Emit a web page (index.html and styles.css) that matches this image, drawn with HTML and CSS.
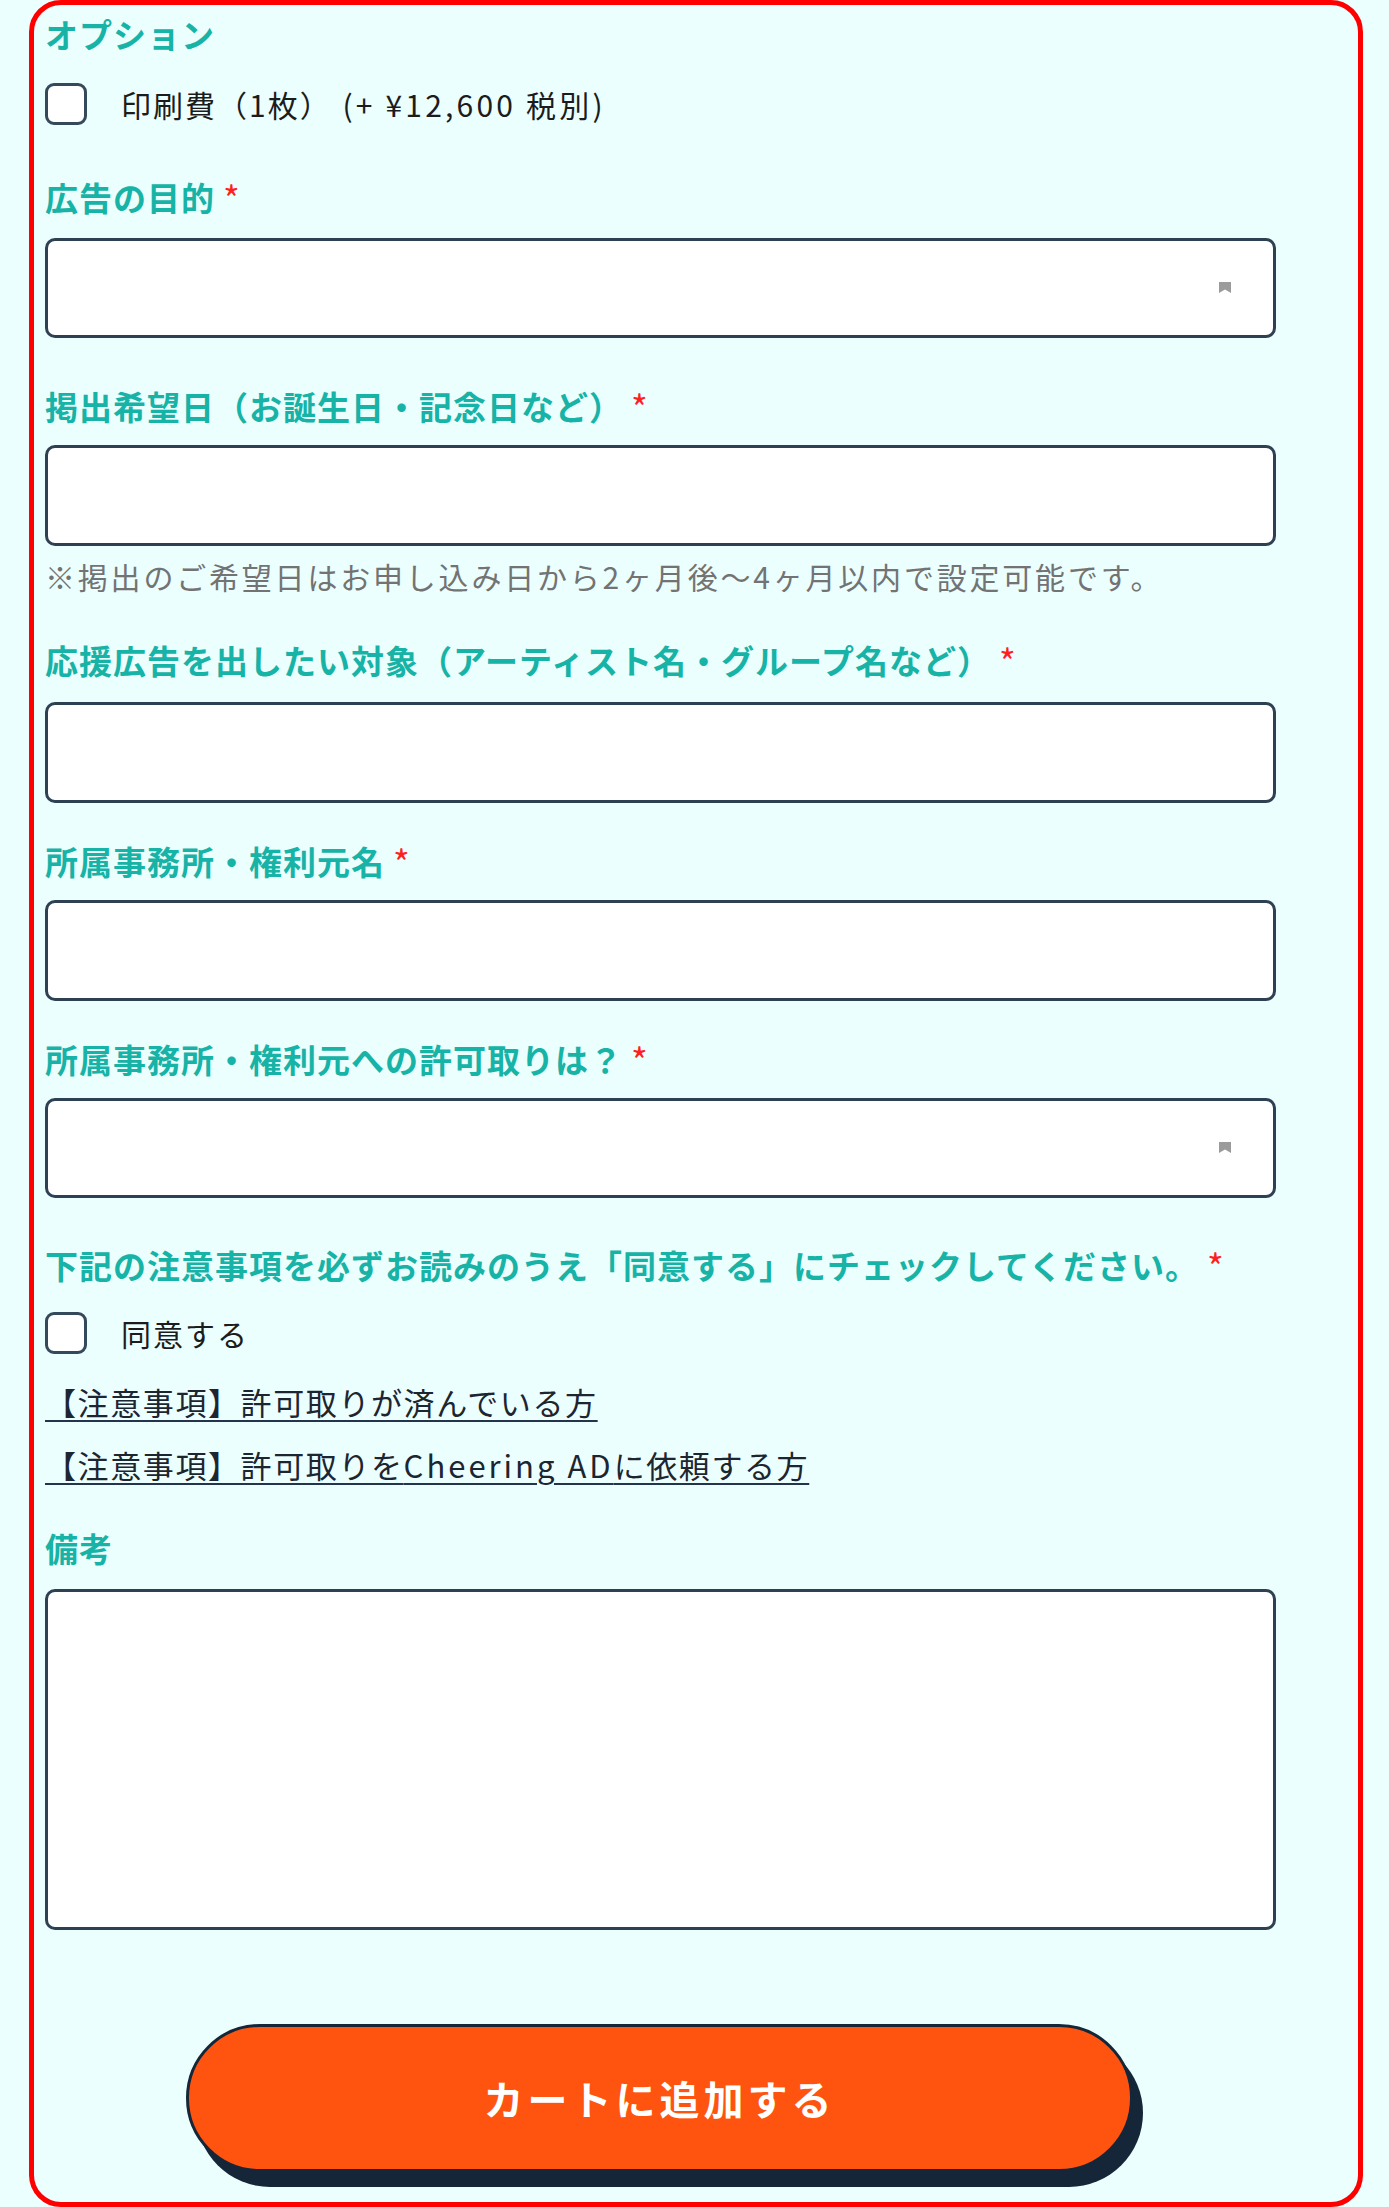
FILE: index.html
```html
<!DOCTYPE html>
<html lang="ja">
<head>
<meta charset="utf-8">
<title>オプション</title>
<link rel="stylesheet" href="styles.css">
</head>
<body>
<form class="card">
  <div class="label label-first">オプション</div>
  <label class="check-row row-option">
    <input type="checkbox" class="check">
    <span class="check-text">印刷費（1枚） <span class="price">(+ ¥12,600 税別)</span></span>
  </label>

  <div class="label gap-a">広告の目的<span class="req">*</span></div>
  <div class="select-wrap">
    <select class="field select"><option></option></select>
    <svg class="arrow" width="12" height="11" viewBox="0 0 12 11"><path d="M0 0H12V11L6 7.5L0 11Z" fill="#9b9b9b"/></svg>
  </div>

  <div class="label gap-b">掲出希望日（お誕生日・記念日など）<span class="req">*</span></div>
  <input type="text" class="field input">
  <p class="note">※掲出のご希望日はお申し込み日から2ヶ月後〜4ヶ月以内で設定可能です。</p>

  <div class="label gap-c">応援広告を出したい対象（アーティスト名・グループ名など）<span class="req">*</span></div>
  <input type="text" class="field input input-c">

  <div class="label gap-d">所属事務所・権利元名<span class="req">*</span></div>
  <input type="text" class="field input">

  <div class="label gap-d">所属事務所・権利元への許可取りは？<span class="req">*</span></div>
  <div class="select-wrap">
    <select class="field select"><option></option></select>
    <svg class="arrow" width="12" height="11" viewBox="0 0 12 11"><path d="M0 0H12V11L6 7.5L0 11Z" fill="#9b9b9b"/></svg>
  </div>

  <div class="label gap-e">下記の注意事項を必ずお読みのうえ「同意する」にチェックしてください。<span class="req">*</span></div>
  <label class="check-row row-agree">
    <input type="checkbox" class="check">
    <span class="check-text">同意する</span>
  </label>
  <a class="link link-1" href="#">【注意事項】許可取りが済んでいる方</a>
  <a class="link link-2" href="#">【注意事項】許可取りを<span class="latin">Cheering AD</span>に依頼する方</a>

  <div class="label gap-f">備考</div>
  <textarea class="field textarea"></textarea>

  <div class="btn-row">
    <button type="button" class="cart-btn">カートに追加する</button>
  </div>
</form>
</body>
</html>
```
FILE: styles.css
```css
html, body {
  margin: 0;
  padding: 0;
}
body {
  background: #ebffff;
  height: 2207px;
  overflow: hidden;
  font-family: "Noto Sans CJK JP", "Noto Sans", sans-serif;
}
.card {
  box-sizing: border-box;
  margin: 0 0 0 29px;
  width: 1334px;
  border: 5px solid #ff0000;
  border-radius: 32px;
  padding: 9px 0 30px 11px;
}
.label {
  font-size: 33px;
  line-height: 40px;
  height: 40px;
  font-weight: 700;
  color: #17b3a6;
  letter-spacing: 1px;
  white-space: nowrap;
}
.req {
  color: #ff1f1f;
  font-size: 36px;
  font-weight: 400;
  margin-left: 8px;
  vertical-align: 0;
  position: relative;
  top: 2px;
}
.gap-a { margin-top: 50px; }
.gap-b { margin-top: 46px; }
.gap-c { margin-top: 42px; }
.gap-d { margin-top: 36px; }
.gap-e { margin-top: 45px; }
.gap-f { margin-top: 43px; }

.check-row {
  display: flex;
  align-items: center;
  height: 42px;
  gap: 34px;
}
.row-option { margin-top: 29px; }
.row-agree { margin-top: 29px; }
.check {
  appearance: none;
  -webkit-appearance: none;
  margin: 0;
  width: 42px;
  height: 42px;
  box-sizing: border-box;
  border: 3px solid #34495a;
  border-radius: 9px;
  background: #ffffff;
  flex: none;
}
.check-text {
  font-size: 30px;
  line-height: 40px;
  color: #1c1c1c;
  letter-spacing: 2px;
  white-space: nowrap;
}
.price {
  letter-spacing: 3.2px;
  margin-left: 2px;
}

.field {
  display: block;
  box-sizing: border-box;
  width: 1231px;
  margin: 0;
  background: #ffffff;
  border: 3px solid #2e4153;
  border-radius: 10px;
  font-family: inherit;
  font-size: 30px;
  outline: none;
}
.select-wrap {
  position: relative;
  margin-top: 23px;
  width: 1231px;
}
.label.gap-d + .select-wrap { margin-top: 21px; }
.select {
  appearance: none;
  -webkit-appearance: none;
  height: 100px;
}
.arrow {
  position: absolute;
  right: 45px;
  top: 44px;
}
.input {
  height: 101px;
  margin-top: 21px;
}
.input-c { margin-top: 24px; }
.note {
  margin: 10px 0 0;
  font-size: 30px;
  line-height: 40px;
  color: #737373;
  letter-spacing: 2.8px;
  white-space: nowrap;
}
.link {
  display: block;
  width: max-content;
  font-size: 31px;
  line-height: 40px;
  color: #1d2530;
  text-decoration: underline;
  text-decoration-color: #24344a;
  text-decoration-thickness: 2px;
  text-underline-offset: 5px;
  letter-spacing: 1.6px;
}
.latin {
  letter-spacing: 3px;
}
.link-1 { margin-top: 28px; }
.link-2 { margin-top: 23px; }
.textarea {
  margin-top: 21px;
  height: 341px;
  resize: none;
}
.btn-row {
  display: flex;
  justify-content: center;
  width: 1231px;
  margin-top: 94px;
}
.cart-btn {
  box-sizing: border-box;
  width: 947px;
  height: 148px;
  border: 3px solid #142638;
  border-radius: 999px;
  background: #ff5410;
  box-shadow: 10px 15px 0 #142638;
  color: #ffffff;
  font-family: inherit;
  font-size: 40px;
  font-weight: 700;
  letter-spacing: 4px;
  padding: 0;
  margin-left: -2px;
}
```
